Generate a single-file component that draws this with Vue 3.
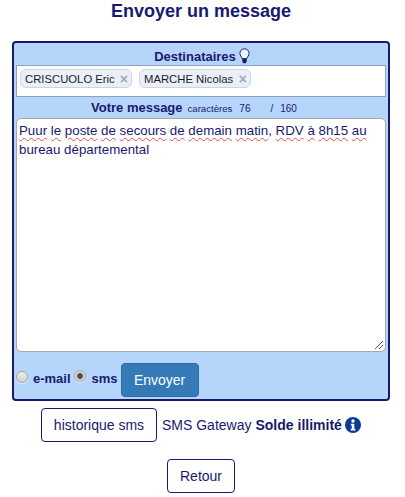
<script setup>
const recipients = ['CRISCUOLO Eric', 'MARCHE Nicolas']
const line1 = ['Puur', 'le', 'poste', 'de', 'secours', 'de', 'demain', 'matin']
const line1b = ['RDV', 'à', '8h15', 'au']
</script>

<template>
  <div class="page">
    <h1 class="title">Envoyer un message</h1>
    <form class="panel" @submit.prevent>
      <div class="label-row">
        <span>Destinataires</span>
        <svg class="bulb" viewBox="0 0 11 16" width="11" height="16" aria-hidden="true">
          <path d="M5.500 .8A4.600 4.600 0 0 0 .9 5.400c0 2.200 1.700 3.200 2.200 5.200h4.800c.5-2 2.200-3 2.200-5.200A4.600 4.600 0 0 0 5.500 .8z" fill="#eaf4ff" stroke="#191970" stroke-width="1"/>
          <path d="M3.300 11h4.400v2.600L6.600 15.200H4.400l-1.100-1.600z" fill="#191970"/>
        </svg>
      </div>
      <div class="recipients">
        <span v-for="r in recipients" :key="r" class="chip">
          <span>{{ r }}</span><span class="chip-x">×</span>
        </span>
      </div>
      <div class="message-row">
        <b>Votre message</b>
        <span class="count">caractères</span>
        <span class="num first">76</span>
        <span class="num slash">/</span>
        <span class="num">160</span>
      </div>
      <div class="textarea">
        <div><template v-for="(w, i) in line1" :key="i"><span class="misspelt">{{ w }}</span>{{ i < line1.length - 1 ? ' ' : ', ' }}</template><template v-for="(w, i) in line1b" :key="w"><span class="misspelt">{{ w }}</span>{{ i < line1b.length - 1 ? ' ' : '' }}</template></div>
        <div>bureau départemental</div>
        <svg class="grip" viewBox="0 0 10 10" width="10" height="10" aria-hidden="true">
          <path d="M1 9 9 1M5 9l4-4" stroke="#555" stroke-width="1" fill="none"/>
        </svg>
      </div>
      <div class="send-row">
        <input class="radio radio-a" type="radio" name="kind" disabled />
        <label class="kind">e-mail</label>
        <input class="radio radio-b" type="radio" name="kind" checked disabled />
        <label class="kind">sms</label>
        <button class="send" type="button">Envoyer</button>
      </div>
    </form>
    <div class="footer-row">
      <button class="outline history" type="button">historique sms</button>
      <span class="gateway">SMS Gateway</span>
      <b class="balance">Solde illimité</b>
      <svg class="info" viewBox="0 0 16 16" width="16" height="16" aria-hidden="true">
        <circle cx="8" cy="8" r="8" fill="#0c3c96"/>
        <circle cx="8" cy="4" r="1.700" fill="#fff"/>
        <path d="M5.800 6.700h3.500v5h1.100v1.700H5.700v-1.700h1.100V8.400h-1z" fill="#fff"/>
      </svg>
    </div>
    <div class="back-row">
      <button class="outline back" type="button">Retour</button>
    </div>
  </div>
</template>

<style scoped>
.page {
  width: 405px;
  height: 497px;
  overflow: hidden;
  box-sizing: border-box;
  padding: 0 15px 0 12px;
  font-family: "Liberation Sans", Arial, sans-serif;
  color: #191970;
}
.title {
  margin: 0;
  height: 41px;
  padding-top: 1px;
  box-sizing: border-box;
  font-size: 18px;
  line-height: 21px;
  font-weight: 700;
  text-align: center;
}
.panel {
  box-sizing: border-box;
  height: 360px;
  border: 2px solid #191970;
  border-radius: 4px;
  background: #b5d5fb;
  padding: 4px 2px 0 2px;
}
.label-row {
  display: flex;
  justify-content: center;
  align-items: center;
  gap: 3px;
  height: 18px;
  font-size: 13px;
  font-weight: 700;
  margin-left: 2px;
}
.bulb { display: block; }
.recipients {
  box-sizing: border-box;
  height: 32px;
  background: #fff;
  border: 1px solid #8da2c4;
  display: flex;
  align-items: flex-start;
  gap: 7px;
  padding: 3px 0 0 3px;
}
.chip {
  box-sizing: border-box;
  width: 112px;
  height: 19px;
  display: flex;
  align-items: center;
  justify-content: space-between;
  padding: 0 3px 0 4px;
  background: #eaeff8;
  border: 1px solid #cdd5e4;
  border-radius: 6px;
  font-size: 11.3px;
  color: #1c1c1c;
}
.chip-x {
  color: #9fa9b8;
  font-weight: 700;
  font-size: 14px;
  line-height: 14px;
}
.message-row {
  height: 21px;
  display: flex;
  align-items: center;
  padding-left: 75px;
  font-size: 13px;
}
.count { font-size: 9.6px; margin-left: 5px; margin-top: 2px; }
.num { font-size: 10px; margin-top: 2px; }
.first { margin-left: 7px; }
.slash { margin-left: 20px; }
.slash + .num { margin-left: 7px; }
.textarea {
  position: relative;
  box-sizing: border-box;
  height: 234px;
  background: #fff;
  border: 1px solid #a8a8a8;
  border-radius: 5px;
  padding: 2px 2px;
  font-size: 13.3px;
  line-height: 19px;
  white-space: nowrap;
}
.misspelt {
  text-decoration: underline wavy #e8504f 1px;
  text-underline-offset: 2px;
}
.grip { position: absolute; right: 1px; bottom: 1px; }
.send-row {
  display: flex;
  align-items: center;
  height: 34px;
  margin-top: 11px;
  font-size: 13px;
  font-weight: 700;
}
.kind { margin-bottom: 4px; }
.radio {
  appearance: none;
  box-sizing: border-box;
  margin: 0;
  width: 12px;
  height: 12px;
  border-radius: 50%;
  border: 1px solid #a5a5a5;
  background: linear-gradient(#f0f0f0, #cfcfcf);
  box-shadow: 0 1px 1px rgba(255, 255, 255, .7);
}
.radio:checked {
  background: radial-gradient(circle, #4f4f4f 0, #4f4f4f 2.500px, #cfcfcf 3.200px, #e6e6e6 100%);
}
.radio-a { margin: 0 5px 7px 0; }
.radio-b { margin: 0 6px 9px 3px; }
.send {
  box-sizing: border-box;
  width: 78px;
  height: 34px;
  margin-left: 3px;
  padding: 0;
  background: #337ab7;
  border: 1px solid #2e6da4;
  border-radius: 4px;
  color: #fff;
  font: 14px "Liberation Sans", Arial, sans-serif;
}
.footer-row {
  display: flex;
  align-items: center;
  height: 34px;
  margin-top: 7px;
  padding-left: 29px;
  font-size: 14px;
}
.outline {
  box-sizing: border-box;
  background: #fff;
  border: 1px solid #191970;
  border-radius: 4px;
  color: #191970;
  padding: 0;
  height: 34px;
  font: 14px "Liberation Sans", Arial, sans-serif;
}
.history { width: 116px; }
.gateway { margin-left: 5px; }
.balance { margin-left: 4px; }
.info { margin-left: 3px; }
.back-row {
  display: flex;
  justify-content: center;
  margin-top: 17px;
}
.back { width: 68px; }
</style>
